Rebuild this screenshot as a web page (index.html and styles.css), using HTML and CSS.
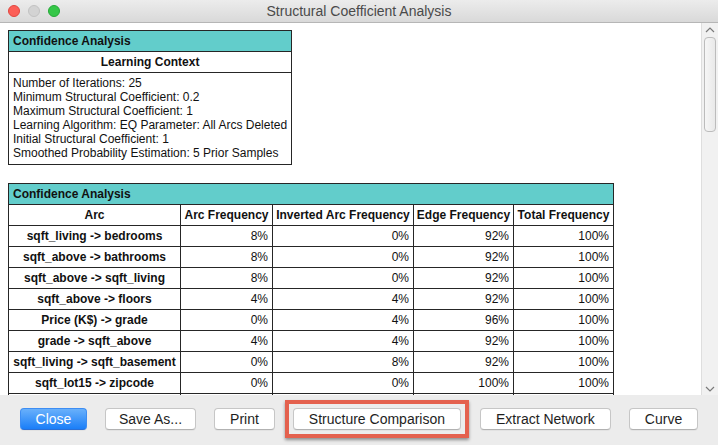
FILE: index.html
```html
<!DOCTYPE html>
<html lang="en">
<head>
  <meta charset="UTF-8">
  <meta name="viewport" content="width=device-width, initial-scale=1.0">
  <title>Structural Coefficient Analysis</title>
  <link rel="stylesheet" href="styles.css">
</head>
<body>
  <div class="window">
    <header class="titlebar">
      <div class="lights">
        <span class="light close"></span>
        <span class="light minimize"></span>
        <span class="light zoom"></span>
      </div>
      <div class="title">Structural Coefficient Analysis</div>
    </header>

    <div class="main">
      <div class="report">
        <table class="context">
          <tr class="band"><th>Confidence Analysis</th></tr>
          <tr class="sub"><th>Learning Context</th></tr>
          <tr>
            <td class="notes">
              Number of Iterations: 25<br>
              Minimum Structural Coefficient: 0.2<br>
              Maximum Structural Coefficient: 1<br>
              Learning Algorithm: EQ Parameter: All Arcs Deleted<br>
              Initial Structural Coefficient: 1<br>
              Smoothed Probability Estimation: 5 Prior Samples
            </td>
          </tr>
        </table>

        <table class="arcs">
          <colgroup>
            <col class="c-arc">
            <col class="c-freq">
            <col class="c-inv">
            <col class="c-edge">
            <col class="c-total">
          </colgroup>
          <tr class="band"><th colspan="5">Confidence Analysis</th></tr>
          <tr class="head">
            <th>Arc</th>
            <th>Arc Frequency</th>
            <th>Inverted Arc Frequency</th>
            <th>Edge Frequency</th>
            <th>Total Frequency</th>
          </tr>
          <tr><th>sqft_living -&gt; bedrooms</th><td>8%</td><td>0%</td><td>92%</td><td>100%</td></tr>
          <tr><th>sqft_above -&gt; bathrooms</th><td>8%</td><td>0%</td><td>92%</td><td>100%</td></tr>
          <tr><th>sqft_above -&gt; sqft_living</th><td>8%</td><td>0%</td><td>92%</td><td>100%</td></tr>
          <tr><th>sqft_above -&gt; floors</th><td>4%</td><td>4%</td><td>92%</td><td>100%</td></tr>
          <tr><th>Price (K$) -&gt; grade</th><td>0%</td><td>4%</td><td>96%</td><td>100%</td></tr>
          <tr><th>grade -&gt; sqft_above</th><td>4%</td><td>4%</td><td>92%</td><td>100%</td></tr>
          <tr><th>sqft_living -&gt; sqft_basement</th><td>0%</td><td>8%</td><td>92%</td><td>100%</td></tr>
          <tr><th>sqft_lot15 -&gt; zipcode</th><td>0%</td><td>0%</td><td>100%</td><td>100%</td></tr>
          <tr class="more"><th></th><td></td><td></td><td></td><td></td></tr>
        </table>
      </div>

      <div class="scrollbar">
        <svg class="arrow" width="10" height="6" viewBox="0 0 10 6"><path d="M1 5 L5 1 L9 5" fill="none" stroke="#7a7a7a" stroke-width="1.2"/></svg>
        <div class="thumb"></div>
        <svg class="arrow down" width="10" height="6" viewBox="0 0 10 6"><path d="M1 1 L5 5 L9 1" fill="none" stroke="#7a7a7a" stroke-width="1.2"/></svg>
      </div>
    </div>

    <footer class="actions">
      <button class="btn primary">Close</button>
      <button class="btn narrow">Save As...</button>
      <button class="btn">Print</button>
      <div class="highlight">
        <button class="btn">Structure Comparison</button>
      </div>
      <button class="btn">Extract Network</button>
      <button class="btn">Curve</button>
    </footer>
  </div>
</body>
</html>
```

FILE: styles.css
```css
body {
  margin: 0;
  font-family: "Liberation Sans", Arial, sans-serif;
  background-color: #ececec;
  color: #111;
}

.window {
  width: 718px;
  height: 445px;
  display: flex;
  flex-direction: column;
  overflow: hidden;
}

/* title bar */

.titlebar {
  height: 22px;
  flex: none;
  display: grid;
  grid-template-columns: 1fr auto 1fr;
  align-items: center;
  background: linear-gradient(#ececec, #d9d9d9);
  border-bottom: 1px solid #b6b6b6;
}

.lights {
  display: flex;
  gap: 8px;
  padding-left: 8px;
}

.light {
  width: 12px;
  height: 12px;
  border-radius: 50%;
  box-sizing: border-box;
}

.light.close {
  background-color: #fc5f57;
  border: 1px solid #e1463f;
}

.light.minimize {
  background-color: #d3d3d3;
  border: 1px solid #c2c2c2;
}

.light.zoom {
  background-color: #35c748;
  border: 1px solid #24a937;
}

.title {
  font-size: 14px;
  color: #4a4a4a;
}

/* report area */

.main {
  height: 372px;
  flex: none;
  display: flex;
  background-color: #ffffff;
}

.report {
  flex: 1;
  overflow: hidden;
  padding: 7px 0 0 8px;
}

table {
  border-collapse: collapse;
  font-size: 12px;
}

th,
td {
  border: 1px solid #262626;
  padding: 0 4px;
  line-height: 20px;
}

.band th {
  background-color: #62cdcb;
  text-align: left;
  font-weight: bold;
}

.context {
  width: 284px;
  margin-bottom: 18px;
}

.context .sub th {
  text-align: center;
}

.context .notes {
  padding: 3px 4px 4px;
  line-height: 14px;
  white-space: nowrap;
}

.arcs {
  table-layout: fixed;
  width: 605px;
}

.arcs .c-arc { width: 172px; }
.arcs .c-freq { width: 92px; }
.arcs .c-inv { width: 141px; }
.arcs .c-edge { width: 100px; }
.arcs .c-total { width: 100px; }

.arcs th {
  text-align: center;
  white-space: nowrap;
  padding: 0 2px;
}

.arcs .band th {
  text-align: left;
  padding: 0 4px;
}

.arcs td {
  text-align: right;
}

.arcs .more th,
.arcs .more td {
  height: 20px;
}

/* scrollbar */

.scrollbar {
  width: 16px;
  flex: none;
  display: flex;
  flex-direction: column;
  align-items: center;
  background-color: #f1f1f1;
  border-left: 1px solid #dedede;
}

.arrow {
  margin-top: 4px;
}

.arrow.down {
  margin-top: auto;
  margin-bottom: 3px;
}

.thumb {
  width: 12px;
  height: 95px;
  margin-top: 4px;
  box-sizing: border-box;
  background: linear-gradient(90deg, #f6f6f6, #e9e9e9);
  border: 1px solid #bcbcbc;
  border-radius: 4px;
}

/* bottom buttons */

.actions {
  height: 50px;
  flex: none;
  box-sizing: border-box;
  display: flex;
  align-items: flex-start;
  gap: 18px;
  padding: 13px 0 0 20px;
  background-color: #ececec;
}

.btn {
  box-sizing: border-box;
  height: 22px;
  padding: 0 15px;
  line-height: 20px;
  font-family: "Liberation Sans", Arial, sans-serif;
  font-size: 14px;
  color: #1e1e1e;
  white-space: nowrap;
  background-color: #ffffff;
  border: 1px solid #c6c6c6;
  border-bottom-color: #b2b2b2;
  border-radius: 4px;
  box-shadow: 0 1px 0 rgba(0, 0, 0, 0.04);
}

.btn.narrow {
  padding: 0 13px;
}

.btn.primary {
  min-width: 67px;
  padding: 0 14px;
  color: #ffffff;
  background: linear-gradient(#69b0fb, #1a7ef8);
  border-color: #3d8df3;
  border-bottom-color: #2a6fd6;
}

.highlight {
  margin: -8px -7px 0 -8px;
  padding: 4px;
  border: 4px solid #e4614e;
  box-shadow: 0 2px 3px rgba(0, 0, 0, 0.4);
  display: flex;
}
```
